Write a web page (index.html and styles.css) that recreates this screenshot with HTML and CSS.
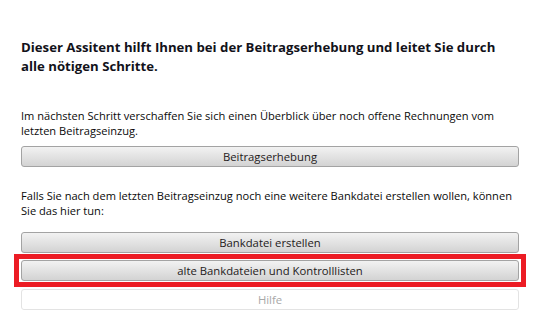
FILE: index.html
```html
<!DOCTYPE html>
<html>
<head>
<meta charset="UTF-8">
<title>Beitragsassistent</title>
<link rel="stylesheet" href="styles.css">
</head>
<body>
<div class="assistent">
	<h1 class="titel">Dieser Assitent hilft Ihnen bei der Beitragserhebung und leitet Sie durch alle nötigen Schritte.</h1>
	<p class="hinweis">Im nächsten Schritt verschaffen Sie sich einen Überblick über noch offene Rechnungen vom letzten Beitragseinzug.</p>
	<button class="knopf">Beitragserhebung</button>
	<p class="hinweis zweiter">Falls Sie nach dem letzten Beitragseinzug noch eine weitere Bankdatei erstellen wollen, können Sie das hier tun:</p>
	<div class="knoepfe">
		<button class="knopf">Bankdatei erstellen</button>
		<div class="markiert">
			<button class="knopf">alte Bankdateien und Kontrolllisten</button>
		</div>
		<button class="knopf" disabled>Hilfe</button>
	</div>
</div>
</body>
</html>
```

FILE: styles.css
```css
body {
	margin: 0;
	background: #fff;
	font-family: "Open Sans", "Liberation Sans", sans-serif;
	color: #0a0a0a;
}

.assistent {
	width: 498px;
	padding: 38px 0 0 21px;
	display: flex;
	flex-direction: column;
}

.titel {
	max-width: 490px;
	margin: 0 0 32px 0;
	font-size: 13.2px;
	line-height: 19px;
	font-weight: bold;
	color: #12121a;
}

.hinweis {
	margin: 0 0 8px 0;
	font-size: 11.1px;
	line-height: 15px;
}
.zweiter {
	margin: 21px 0 14px 0;
}

.knoepfe {
	display: flex;
	flex-direction: column;
}

.knopf {
	height: 21px;
	padding: 0;
	border: 1px solid #a3a3a3;
	border-radius: 3px;
	background: linear-gradient(#f2f2f2, #d3d3d3);
	font-family: inherit;
	font-size: 11.3px;
	color: #1e1a20;
	cursor: pointer;
}
.knopf:disabled {
	background: #fff;
	border-color: #e3e3e3;
	color: #a8a8a8;
	cursor: default;
}

.markiert {
	margin: 1px -7px 2px -7px;
	padding: 1px 2px 1px 2px;
	border: 5px solid #ec1c24;
	display: flex;
	flex-direction: column;
}
```
